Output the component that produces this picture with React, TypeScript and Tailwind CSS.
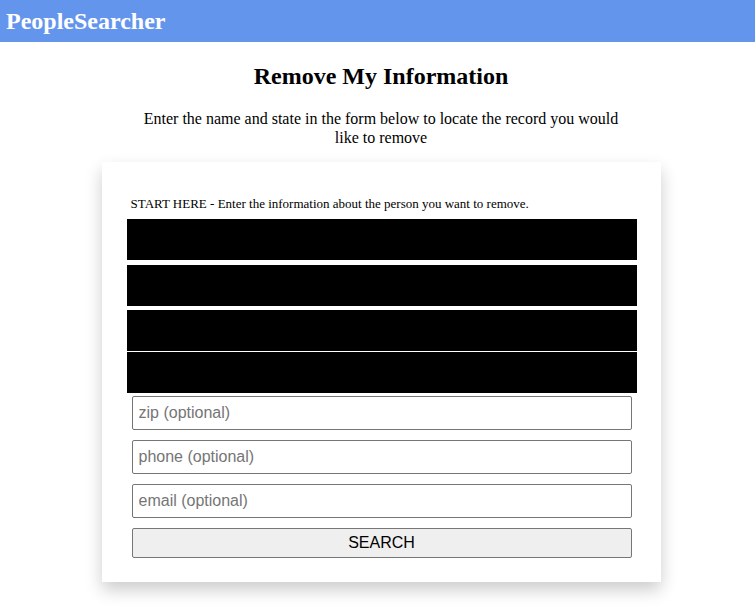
export default function App() {
  return (
    <div className="min-h-[608px] bg-white font-['Liberation_Serif',serif] text-black">
      <header className="h-[42px] bg-[#6495ed] flex items-center px-[6px]">
        <h1 className="text-[24px] font-bold text-white leading-none">PeopleSearcher</h1>
      </header>
      <main className="pl-[7px] flex flex-col items-center">
        <h2 className="mt-[20px] text-[24px] font-bold leading-[28px]">Remove My Information</h2>
        <p className="mt-[19px] w-[500px] text-center text-[16px] leading-[19px]">
          Enter the name and state in the form below to locate the record you would like to remove
        </p>
        <div className="mt-[15px] w-[559px] bg-white shadow-[0_8px_16px_0_rgba(0,0,0,0.2)] pt-[34px] pb-[24px] pl-[25px] pr-[24px]">
          <p className="pl-[4px] text-[13px] leading-[15px]">
            START HERE - Enter the information about the person you want to remove.
          </p>
          <div className="mt-[8px] flex flex-col">
            <div className="h-[41px] bg-black" />
            <div className="mt-[5px] h-[41px] bg-black" />
            <div className="mt-[4px] h-[41px] bg-black" />
            <div className="mt-[1px] h-[41px] bg-black" />
          </div>
          <div className="mx-[5px] mt-[3px] flex flex-col gap-[10px] font-['Liberation_Sans',sans-serif]">
            <input
              placeholder="zip (optional)"
              className="h-[34px] w-full border border-[#767676] rounded-[2px] px-[6px] text-[16px] placeholder:text-[#757575] outline-none"
            />
            <input
              placeholder="phone (optional)"
              className="h-[34px] w-full border border-[#767676] rounded-[2px] px-[6px] text-[16px] placeholder:text-[#757575] outline-none"
            />
            <input
              placeholder="email (optional)"
              className="h-[34px] w-full border border-[#767676] rounded-[2px] px-[6px] text-[16px] placeholder:text-[#757575] outline-none"
            />
            <button className="h-[30px] w-full border border-[#767676] rounded-[2px] bg-[#efefef] text-[16px] text-black">
              SEARCH
            </button>
          </div>
        </div>
      </main>
    </div>
  );
}
